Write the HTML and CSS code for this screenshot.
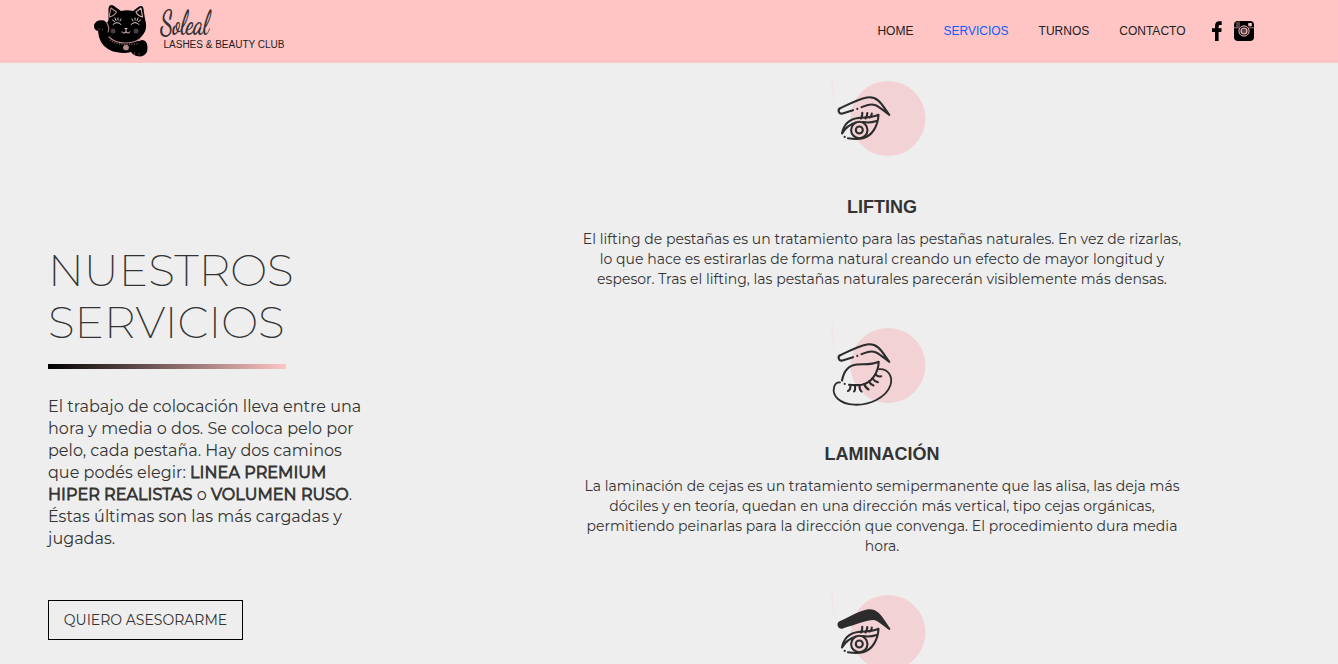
FILE: index.html
```html
<!DOCTYPE html>
<html lang="es">
<head>
<meta charset="utf-8">
<title>Soleal - Lashes &amp; Beauty Club</title>
<link rel="stylesheet" href="styles.css">
</head>
<body>
<svg class="sprite" aria-hidden="true">
  <symbol id="halo" viewBox="2 0 120 100">
    <circle cx="68" cy="48.5" r="37.5" fill="#f2d2d5" stroke="none"/>
    <path d="M11.5 7Q11 22 15 36Q12.5 22 12.5 7Z" fill="#f2e2e3" stroke="#f1e6e7" stroke-width=".6"/>
  </symbol>
  <symbol id="brow" viewBox="2 0 120 100">
    <path d="M33 40.2L22.5 43.4C18.5 44.5 17.2 39.4 20.5 38C30 33.5 39 29 47 27.5C59 25.5 63 37 69.3 44.8C64 41 60 37 55.5 35.2C50 33 46 35.5 41.5 37.2"/>
    <path d="M37.3 38.8v.1"/>
  </symbol>
  <symbol id="eye" viewBox="2 0 120 100">
    <path d="M22 63.5C24 53 31 49 38 48C46 47 52 48 58.5 44.8C58 56 52 66 43 68.2C38 69.3 32 68.8 28 68.3M24.7 66.8v.1M22 63.5C26 57 31 54 36 52.6M43 52C48 53 52 52.5 56.5 51"/>
    <circle cx="39.3" cy="60" r="8.2"/>
    <circle cx="39.3" cy="60" r="3.5"/>
    <path d="M41 48.5Q42.5 46 42.3 42.8M45.5 48.5Q47.5 46 47.3 43M50 47.5Q51.8 46 51.8 43.5"/>
  </symbol>
</svg>

<header class="topbar">
  <a class="brand">
    <svg class="cat" viewBox="0 0 75 63" aria-hidden="true">
      <path d="M23.500 20L23.500 8Q24.500 3.500 29 6L36 11Q42 9.500 48 11L54 6.500Q58 4.500 58.500 9L60 19Q63 28 58.500 34Q55 39 51 40.500Q53 42 57 40Q62 40 62.500 47Q63 55 56 56.500Q49 56.500 46 52Q40 54 31 52Q28 52 23 49Q14 44 13 31Q8.500 30 9 25Q11 19 19 20.500L22 23Z" fill="#000"/>
      <g fill="none" stroke="#b9898c" stroke-width="1.100" stroke-linecap="round" stroke-linejoin="round">
        <path d="M24.500 15L26 8L31.500 12Q29 16 24.500 17Z"/>
        <path stroke="#d9b5b6" d="M51 12L56 8L57.500 17Q53 16 51 12Z"/>
        <path d="M22 23Q25 29 23 32M24 37Q30 43 40 43Q49 43 55 39"/>
        <circle cx="41" cy="47.500" r="2.300" fill="#b9898c"/>
      </g>
      <path d="M25 40Q32 46.500 54 43.500" fill="none" stroke="#805b5d" stroke-width="1.400" stroke-dasharray="1 1.500"/>
      <path d="M14 30.500v-2.500M17.500 30.500v-2M49.500 55v-3M54 55.500v-3" fill="none" stroke="#70595a" stroke-width=".7"/>
      <g fill="none" stroke="#f6dcdc" stroke-width=".9" stroke-linecap="round">
        <path d="M28 24.500Q32 20.500 36 24.500M46 24.500Q50 20.500 54 24.500M27.500 20l2 1.500M30 18l1 2.500M33 18v2M36 19l-1 2M47 19l1 2M50 18v2M53 18l-1 2.500M55.500 20l-2 1.500"/>
        <path d="M37 32Q39 34.500 41 32Q43 34.500 45 32M41 32V29M40 28.500h2"/>
      </g>
      <g fill="#493f40"><circle cx="28" cy="31" r="2.500"/><circle cx="51" cy="31" r="2.500"/></g>
    </svg>
    <span class="wordmark">
      <span class="name">Soleal</span>
      <span class="tagline">LASHES &amp; BEAUTY CLUB</span>
    </span>
  </a>
  <nav class="menu">
    <a>HOME</a>
    <a class="active">SERVICIOS</a>
    <a>TURNOS</a>
    <a>CONTACTO</a>
  </nav>
  <div class="social">
    <svg class="facebook" viewBox="0 0 10 20"><path d="M3 20V11H0V7.300H3V5Q3 .5 7.200 .3H9.700V4H8Q6.600 4 6.600 5.400V7.300H9.700L9.300 11H6.600V20Z"/></svg>
    <svg class="instagram" viewBox="0 0 20 20">
      <rect width="20" height="20" rx="4"/>
      <path d="M0 6.800H5.500M14.500 6.800H20M3 1V6M5 .5V6" fill="none" stroke="#cf9c9d" stroke-width=".8"/>
      <rect x="14.300" y="2" width="3.500" height="3.300" rx=".6" fill="#ffc5c5"/>
      <circle cx="10" cy="10" r="5.100" fill="#000" stroke="#ffc5c5" stroke-width="1"/>
      <circle cx="10" cy="10" r="3" fill="#5c4748" stroke="#ffc5c5" stroke-width="1.200"/>
    </svg>
  </div>
</header>

<main class="content">
  <section class="intro">
    <h1>NUESTROS SERVICIOS</h1>
    <div class="rule"></div>
    <p>El trabajo de colocación lleva entre una hora y media o dos. Se coloca pelo por pelo, cada pestaña. Hay dos caminos que podés elegir: <strong>LINEA PREMIUM HIPER REALISTAS</strong> o <strong>VOLUMEN RUSO</strong>. Éstas últimas son las más cargadas y jugadas.</p>
    <a class="button">QUIERO ASESORARME</a>
  </section>

  <section class="services">
    <article class="service">
      <svg class="icon" viewBox="2 0 120 100">
        <use href="#halo" x="2" width="120" height="100"/>
        <use href="#brow" x="2" width="120" height="100"/>
        <use href="#eye" x="2" width="120" height="100"/>
      </svg>
      <h3>LIFTING</h3>
      <p>El lifting de pestañas es un tratamiento para las pestañas naturales. En vez de rizarlas, lo que hace es estirarlas de forma natural creando un efecto de mayor longitud y espesor. Tras el lifting, las pestañas naturales parecerán visiblemente más densas.</p>
    </article>
    <article class="service">
      <svg class="icon" viewBox="2 0 120 100">
        <use href="#halo" x="2" width="120" height="100"/>
        <use href="#brow" x="2" width="120" height="100"/>
        <path d="M22 63.5C24 53 30 48 37 47.5C45 47 52 48 58.7 44.8C58.5 56 51 66 42 67.7C37 68.4 33 68.2 29 67.8M24.7 66.8v.1"/>
        <path class="fine" d="M59 52.2C68 51.5 73 59 70.5 68C66 81.5 48 88.5 34 87.7C20 87 12 79 14 70.5C15 66.5 17 65.2 20 65.5"/>
        <path d="M30.5 68.5Q30.5 73 28 74M35 69Q35.5 73.5 34 74.5M39.5 69Q39.5 73 41.5 74.5M44.5 67Q45 70.5 48.5 72.5M49 64.5Q50.5 67.5 53.5 68.5M52.5 61.5Q54.5 64.5 58 65.3M55.5 57.5Q58 60 61.2 59.3"/>
      </svg>
      <h3>LAMINACIÓN</h3>
      <p>La laminación de cejas es un tratamiento semipermanente que las alisa, las deja más dóciles y en teoría, quedan en una dirección más vertical, tipo cejas orgánicas, permitiendo peinarlas para la dirección que convenga. El procedimiento dura media hora.</p>
    </article>
    <article class="service">
      <svg class="icon" viewBox="2 0 120 100">
        <use href="#halo" x="2" width="120" height="100"/>
        <path class="filled" d="M22.5 43.4C18.5 44.5 17.2 39.4 20.5 38C30 33.500 39 28 47 26.500C59 24.500 63 37 69.3 44.8C64 41 60 37 55.5 35.2C50 33 38 39 22.5 43.4Z"/>
        <use href="#eye" x="2" width="120" height="100"/>
      </svg>
    </article>
  </section>
</main>
</body>
</html>
```
FILE: styles.css
```css
* { box-sizing: border-box; }

body {
  margin: 0;
  height: 664px;
  overflow: hidden;
  background: #eee;
  color: #333;
  font-family: Montserrat, Inter, "Open Sans", sans-serif;
}

.sprite { display: none; }
h1, h3, p { margin: 0; }

.topbar {
  display: flex;
  align-items: center;
  height: 63px;
  padding: 0 84px 1px 85px;
  background: #ffc5c5;
  color: #212121;
  font-family: "Liberation Sans", Arial, sans-serif;
  font-size: 12px;
}

.brand { display: flex; }
.cat { width: 75px; height: 63px; }
.wordmark { padding-top: 6px; }
.name {
  display: block;
  width: 60px;
  height: 32px;
  color: #333;
  font: 700 34px/36px "Dancing Script", Lato, sans-serif;
  letter-spacing: -.5px;
  transform: scaleX(.67);
  transform-origin: 0 0;
}
.tagline {
  display: block;
  padding-left: 3.5px;
  font-size: 10px;
  line-height: 14px;
  white-space: nowrap;
}

.menu { display: flex; gap: 30px; margin-left: auto; }
.menu .active { color: #0d5fff; }
.social { display: flex; gap: 12px; margin-left: 26.5px; fill: #000; }
.facebook { width: 10px; height: 20px; }
.instagram { width: 20px; height: 20px; }

.content {
  display: grid;
  grid-template-columns: 582px 600px;
}

.intro { padding: 181px 0 0 48px; }
.intro h1 {
  width: 320px;
  font-size: 44px;
  font-weight: 200;
  line-height: 52px;
}
.rule {
  width: 238px;
  height: 5px;
  margin-top: 16px;
  background: linear-gradient(90deg, #000, #ffc5c5);
}
.intro p {
  width: 318px;
  margin-top: 27px;
  font-size: 16px;
  letter-spacing: .02px;
  line-height: 22px;
}
.intro strong {
  font-weight: 400;
  letter-spacing: .08px;
  -webkit-text-stroke: .8px #333;
}
.button {
  display: flex;
  align-items: center;
  justify-content: center;
  width: 195px;
  height: 40px;
  margin-top: 50px;
  border: 1px solid #000;
  font-size: 14px;
}

.services { padding-top: 7px; height: 601px; overflow: hidden; }
.service {
  display: flex;
  flex-direction: column;
  align-items: center;
  margin-bottom: 28px;
}
.icon {
  width: 120px;
  height: 100px;
  fill: none;
  stroke: #2c2c2c;
  stroke-width: 2.1;
  stroke-linecap: round;
  stroke-linejoin: round;
}
.icon .filled { fill: #2c2c2c; }
.icon .fine { stroke-width: 1.8; }
.service h3 {
  margin-top: 27px;
  font: bold 18px/20px "Liberation Sans", Arial, sans-serif;
}
.service p {
  margin: 12px -2px 0;
  font-size: 14px;
  letter-spacing: .02px;
  line-height: 20px;
  text-align: center;
}
```
